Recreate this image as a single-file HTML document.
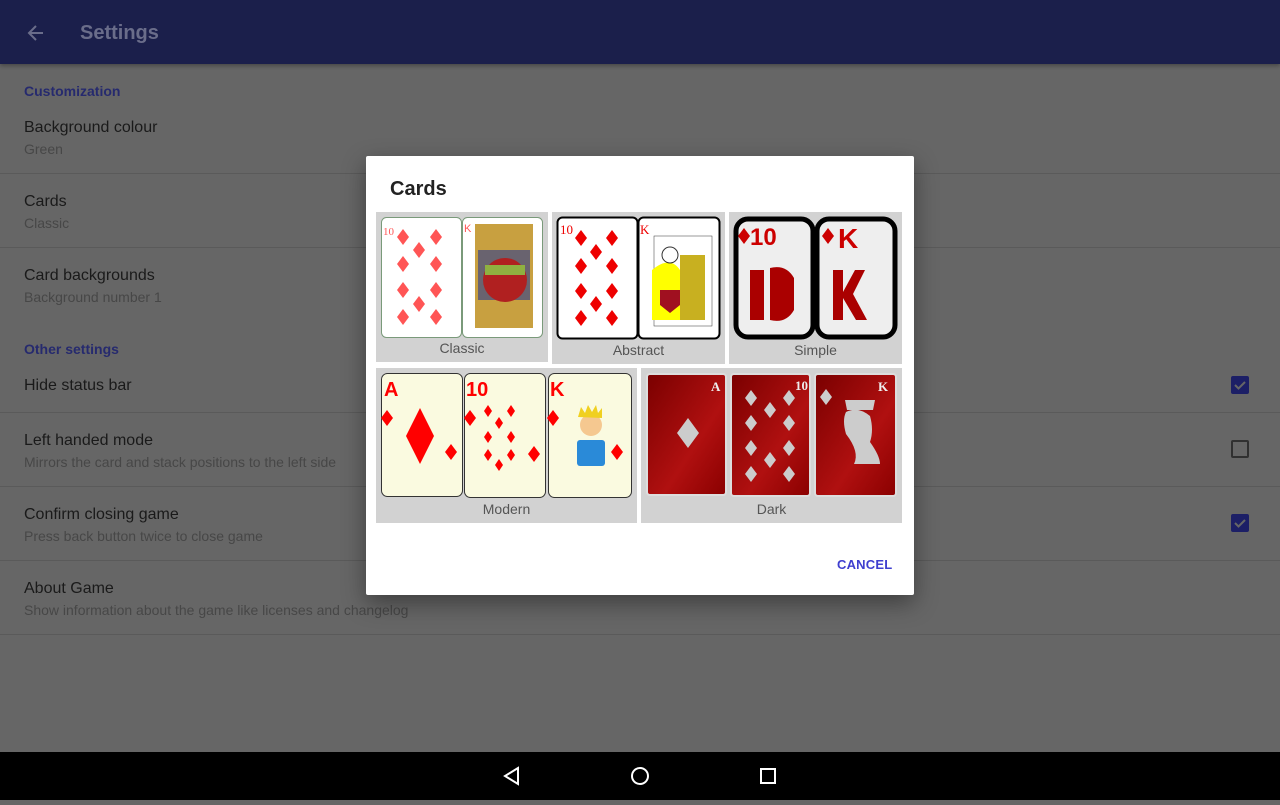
<!DOCTYPE html>
<html><head><meta charset="utf-8"><style>
*{margin:0;padding:0;box-sizing:border-box}
html,body{width:1280px;height:800px}
body{position:relative;overflow:hidden;background:#666;font-family:"Liberation Sans",Roboto,sans-serif}
.bar{position:absolute;left:0;top:0;width:1280px;height:64px;background:#1b1f4b;box-shadow:0 2px 4px rgba(0,0,0,.3)}
.bar .t{position:absolute;left:80px;top:22px;font-size:20px;color:#6a6d8a;font-weight:bold}
.t1{position:absolute;left:24px;font-size:16px;color:#1a1a1a}
.t2{position:absolute;left:24px;font-size:14px;color:#474747}
.h{position:absolute;left:24px;font-size:14px;color:#262a6e;font-weight:bold}
.dv{position:absolute;left:0;width:1280px;height:1px;background:#5a5a5a}
.cb{position:absolute;left:1231px;width:18px;height:18px;border-radius:2px;background:#1c1f66}
.cb.e{background:none;border:2px solid #303030}
.nav{position:absolute;left:0;top:752px;width:1280px;height:48px;background:#000}
.dlg{position:absolute;left:366px;top:156px;width:548px;height:439px;background:#fff;border-radius:2px;box-shadow:0 8px 24px rgba(0,0,0,.4)}
.lbl{position:absolute;font-size:14px;color:#555;text-align:center}
</style></head><body>
<div class="bar">
<svg style="position:absolute;left:26px;top:23px" width="20" height="20" viewBox="0 0 20 20"><path d="M17 10H4M10 3L3 10l7 7" stroke="#6a6d8a" stroke-width="2" fill="none"/></svg>
<div class="t">Settings</div></div>
<div class="h" style="top:83px">Customization</div>
<div class="t1" style="top:119px">Background colour</div><div class="t2" style="top:141px">Green</div>
<div class="dv" style="top:173px"></div>
<div class="t1" style="top:193px">Cards</div><div class="t2" style="top:215px">Classic</div>
<div class="dv" style="top:247px"></div>
<div class="t1" style="top:267px">Card backgrounds</div><div class="t2" style="top:289px">Background number 1</div>
<div class="h" style="top:341px">Other settings</div>
<div class="t1" style="top:377px">Hide status bar</div><div class="cb" style="top:376px"></div>
<div class="dv" style="top:412px"></div>
<div class="t1" style="top:432px">Left handed mode</div><div class="t2" style="top:454px">Mirrors the card and stack positions to the left side</div><div class="cb e" style="top:440px"></div>
<div class="dv" style="top:486px"></div>
<div class="t1" style="top:506px">Confirm closing game</div><div class="t2" style="top:528px">Press back button twice to close game</div><div class="cb" style="top:514px"></div>
<div class="dv" style="top:560px"></div>
<div class="t1" style="top:580px">About Game</div><div class="t2" style="top:602px">Show information about the game like licenses and changelog</div>
<div class="dv" style="top:634px"></div>
<svg style="position:absolute;left:1231px;top:376px" width="18" height="18"><path d="M4 9l3.5 3.5L14 6" stroke="#666" stroke-width="2" fill="none"/></svg>
<svg style="position:absolute;left:1231px;top:514px" width="18" height="18"><path d="M4 9l3.5 3.5L14 6" stroke="#666" stroke-width="2" fill="none"/></svg>
<div class="nav"><svg width="1280" height="48"><path d="M518 16L505 24L518 32Z" stroke="#fff" stroke-width="2" fill="none"/><circle cx="640" cy="24" r="8" stroke="#fff" stroke-width="2" fill="none"/><rect x="761" y="17" width="14" height="14" stroke="#fff" stroke-width="2" fill="none"/></svg></div>
<div class="dlg">
<div style="position:absolute;left:24px;top:22px;font-size:20px;color:#222;font-weight:bold">Cards</div>
<svg style="position:absolute;left:0;top:0" width="548" height="439" viewBox="366 156 548 439">
<defs>
<path id="d" d="M0,-8L6,0L0,8L-6,0Z"/>
<path id="s" d="M0,-6L4,0L0,6L-4,0Z"/>
<linearGradient id="rg" x1="0" y1="0" x2="1" y2="1"><stop offset="0" stop-color="#7a0000"/><stop offset=".6" stop-color="#b01010"/><stop offset="1" stop-color="#8a0000"/></linearGradient>
</defs>
<g fill="#d2d2d2"><rect x="376" y="212" width="172" height="150"/><rect x="552" y="212" width="173" height="152"/><rect x="729" y="212" width="173" height="152"/><rect x="376" y="368" width="261" height="155"/><rect x="641" y="368" width="261" height="155"/></g>
<!-- classic -->
<rect x="381.5" y="217.5" width="80" height="120" rx="5" fill="#fff" stroke="#7a9a7a"/>
<rect x="462.5" y="217.5" width="80" height="120" rx="5" fill="#fff" stroke="#7a9a7a"/>
<g fill="#f55"><use href="#d" x="403" y="237"/><use href="#d" x="436" y="237"/><use href="#d" x="419" y="250"/><use href="#d" x="403" y="264"/><use href="#d" x="436" y="264"/><use href="#d" x="403" y="290"/><use href="#d" x="436" y="290"/><use href="#d" x="419" y="304"/><use href="#d" x="403" y="317"/><use href="#d" x="436" y="317"/></g>
<text x="383" y="235" font-size="11" fill="#f55" font-family="Liberation Serif">10</text>
<rect x="475" y="224" width="58" height="104" fill="#c8a040"/><rect x="478" y="250" width="52" height="50" fill="#2a3a90" opacity=".6"/><circle cx="505" cy="280" r="22" fill="#b02020"/><rect x="485" y="265" width="40" height="10" fill="#8fb040"/><text x="464" y="232" font-size="11" fill="#f55">K</text>
<!-- abstract -->
<rect x="557.5" y="217.5" width="80" height="121" rx="5" fill="#fff" stroke="#000" stroke-width="2"/>
<rect x="638.5" y="217.5" width="81" height="121" rx="5" fill="#fff" stroke="#000" stroke-width="2"/>
<g fill="#e00"><use href="#d" x="581" y="238"/><use href="#d" x="612" y="238"/><use href="#d" x="596" y="252"/><use href="#d" x="581" y="266"/><use href="#d" x="612" y="266"/><use href="#d" x="581" y="291"/><use href="#d" x="612" y="291"/><use href="#d" x="596" y="304"/><use href="#d" x="581" y="318"/><use href="#d" x="612" y="318"/></g>
<text x="560" y="234" font-size="13" fill="#e00" font-family="Liberation Serif">10</text>
<text x="640" y="234" font-size="13" fill="#e00" font-family="Liberation Serif">K</text>
<rect x="654" y="236" width="58" height="90" fill="#fff" stroke="#333" stroke-width=".5"/><path d="M652 270Q670 255 680 270V320H652Z" fill="#ff0"/><rect x="680" y="255" width="25" height="65" fill="#c8b020"/><circle cx="670" cy="255" r="8" fill="#fff" stroke="#333"/><path d="M660 290h20v15l-10 8-10-8z" fill="#a01020"/>
<!-- simple -->
<rect x="736" y="219" width="77" height="118" rx="12" fill="#eee" stroke="#000" stroke-width="5"/>
<rect x="817" y="219" width="78" height="118" rx="12" fill="#eee" stroke="#000" stroke-width="5"/>
<text x="750" y="245" font-size="24" font-weight="bold" fill="#c00">10</text><use href="#d" x="744" y="236" fill="#c00"/>
<text x="838" y="248" font-size="28" font-weight="bold" fill="#c00">K</text><use href="#d" x="828" y="236" fill="#c00"/>
<path d="M750 270h14v50h-14z M770 268q16 -4 24 10v32q-8 14 -24 10z" fill="#a00"/>
<path d="M833 270h10v22l12-22h10l-12 24 14 26h-11l-13-22v22h-10z" fill="#a00"/>
<!-- modern -->
<g fill="#fafae0" stroke="#333" stroke-width="1"><rect x="381.5" y="373.5" width="81" height="123" rx="6"/><rect x="464.5" y="373.5" width="81" height="124" rx="6"/><rect x="548.5" y="373.5" width="83" height="124" rx="6"/></g>
<g fill="#f00" font-weight="bold" font-size="20"><text x="384" y="396">A</text><text x="466" y="396">10</text><text x="550" y="396">K</text></g>
<path d="M420 408L434 436L420 464L406 436Z" fill="#f00"/>
<g fill="#f00"><use href="#d" x="387" y="418"/><use href="#d" x="470" y="418"/><use href="#d" x="553" y="418"/><use href="#d" x="451" y="452"/><use href="#d" x="534" y="454"/><use href="#d" x="617" y="452"/><use href="#s" x="488" y="411"/><use href="#s" x="511" y="411"/><use href="#s" x="499" y="423"/><use href="#s" x="488" y="437"/><use href="#s" x="511" y="437"/><use href="#s" x="488" y="455"/><use href="#s" x="511" y="455"/><use href="#s" x="499" y="465"/></g>
<rect x="577" y="440" width="28" height="26" rx="3" fill="#2a8ad8"/><circle cx="591" cy="425" r="11" fill="#f5c890"/><path d="M578 417l3-10 4 6 3-8 4 7 4-7 2 8 4-5v10z" fill="#f0d020"/>
<!-- dark -->
<g stroke="#ddd" stroke-width="2" fill="url(#rg)"><rect x="647" y="374" width="79" height="121" rx="3"/><rect x="731" y="374" width="79" height="122" rx="3"/><rect x="815" y="374" width="81" height="122" rx="3"/></g>
<path d="M688 418L699 433L688 448L677 433Z" fill="#ccc"/>
<g fill="#ccc"><use href="#d" x="751" y="398"/><use href="#d" x="789" y="398"/><use href="#d" x="770" y="410"/><use href="#d" x="751" y="423"/><use href="#d" x="789" y="423"/><use href="#d" x="751" y="448"/><use href="#d" x="789" y="448"/><use href="#d" x="770" y="460"/><use href="#d" x="751" y="474"/><use href="#d" x="789" y="474"/><use href="#d" x="826" y="397"/></g>
<path d="M845 400h30l-2 10h-26z M846 412q12-6 24 4q4 14 0 26q10 14 10 22h-26q6-12 -8-30q-4-14 0-22z" fill="#ccc"/>
<g fill="#eee" font-family="Liberation Serif" font-weight="bold" font-size="13"><text x="711" y="391">A</text><text x="795" y="390">10</text><text x="878" y="391">K</text></g>
</svg>
<div class="lbl" style="left:10px;top:184px;width:172px">Classic</div>
<div class="lbl" style="left:186px;top:186px;width:173px">Abstract</div>
<div class="lbl" style="left:363px;top:186px;width:173px">Simple</div>
<div class="lbl" style="left:10px;top:345px;width:261px">Modern</div>
<div class="lbl" style="left:275px;top:345px;width:261px">Dark</div>
<div style="position:absolute;left:471px;top:401px;font-size:13px;font-weight:bold;color:#3f3fcf;letter-spacing:.2px">CANCEL</div>
</div>
</body></html>
